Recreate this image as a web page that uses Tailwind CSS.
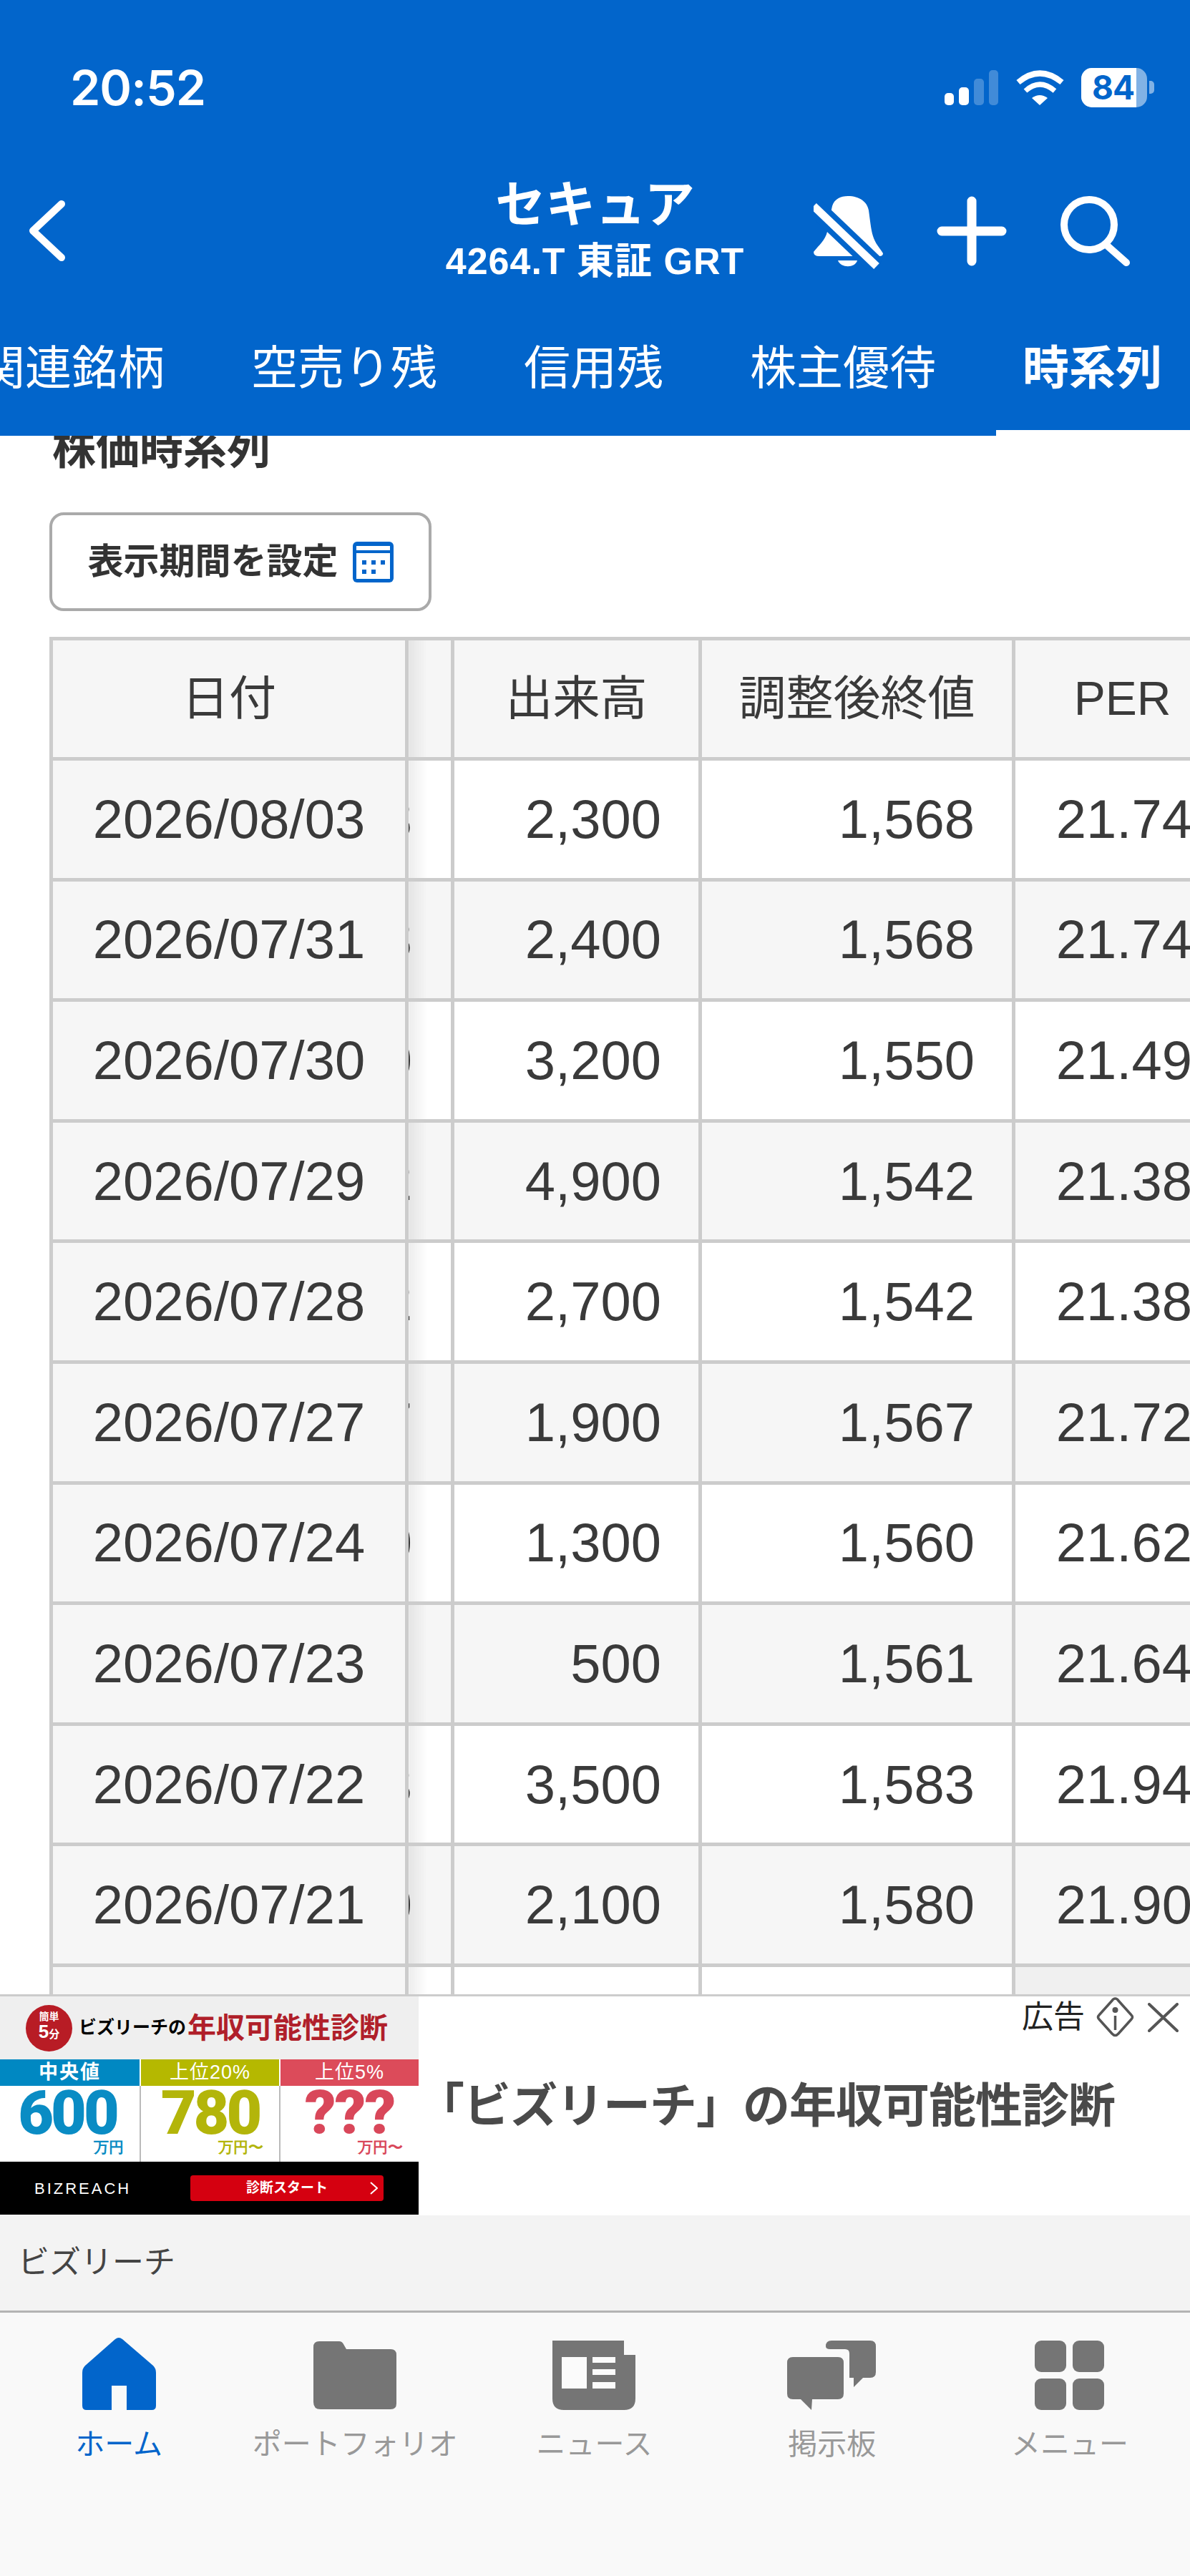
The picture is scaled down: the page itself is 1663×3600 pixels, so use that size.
<!DOCTYPE html>
<html lang="ja">
<head>
<meta charset="UTF-8">
<title>セキュア 時系列</title>
<script src="https://cdn.jsdelivr.net/npm/@tailwindcss/browser@4"></script>
</head>
<body class="bg-white">
<div class="flex flex-col w-[1663px] h-[3600px] overflow-hidden text-[#333] font-['Liberation_Sans','Noto_Sans_CJK_JP',sans-serif]">

  <!-- blue header -->
  <header class="relative z-10 h-[609px] shrink-0 bg-[#0265cb] text-white flex flex-col">
    <!-- status bar -->
    <div class="h-[210px] pt-[82px] pl-[98px] pr-[50px]">
      <div class="h-[80px] flex items-center justify-between">
        <span class="text-[68px] leading-[80px] font-['Inter',sans-serif] font-semibold tracking-[-1px]">20:52</span>
        <div class="flex items-center">
          <svg class="w-[75px] h-[49px]" viewBox="0 0 75 49" fill="#fff">
            <rect x="0" y="32" width="13" height="17" rx="5"/><rect x="20" y="24" width="14" height="25" rx="5"/>
            <rect x="41" y="12" width="14" height="37" rx="5" opacity=".25"/><rect x="62" y="0" width="13" height="49" rx="5" opacity=".25"/>
          </svg>
          <svg class="w-[67px] h-[49px] ml-[25px]" viewBox="0 0 67 49" fill="none" stroke="#fff">
            <path d="M3 17 Q33 -8 64 17" stroke-width="8"/><path d="M13 29 Q33 11 54 29" stroke-width="7"/>
            <path d="M33 49 L22 39 Q33 31 44 39 Z" fill="#fff" stroke="none"/>
          </svg>
          <div class="relative w-[92px] h-[55px] ml-[24px] rounded-[15px] bg-white/50 overflow-hidden">
            <div class="absolute inset-y-0 left-0 w-[77px] bg-white"></div>
            <span class="absolute left-[15px] top-0 leading-[55px] text-[#0265cb] text-[46px] font-bold font-['Inter',sans-serif] tracking-[-1px]">84</span>
          </div>
          <div class="w-[7px] h-[18px] ml-[3px] rounded-r-[5px] bg-white/50"></div>
        </div>
      </div>
    </div>

    <!-- title row -->
    <div class="relative h-[190px] flex flex-col items-center pt-[37px]">
      <svg class="absolute left-[36px] top-[70px] w-[60px] h-[85px]" viewBox="0 0 60 85" fill="none" stroke="#fff" stroke-width="10" stroke-linecap="round" stroke-linejoin="round"><path d="M50 5 L10 42.5 L50 80"/></svg>
      <div class="text-[70px] leading-[80px] font-bold">セキュア</div>
      <div class="mt-[10px] text-[52px] leading-[56px] font-bold tracking-[1px]">4264.T 東証 GRT</div>
      <div class="absolute right-[84px] top-[64px] flex items-start gap-[75px]">
        <svg class="w-[97px] h-[102px]" viewBox="0 0 97 102" fill="#fff">
          <path d="M48 0 C64 0 75 8 77 20 C79 34 80 46 83 56 C86 66 92 72 97 80 Q97 84 92 84 L8 84 Q0 84 0 78 C8 68 16 62 19 50 C22 38 23 26 26 14 C29 4 38 0 48 0Z"/>
          <path d="M34 90 H61 C58 101 38 101 34 90Z"/>
          <path d="M0 14 L88 98" stroke="#0265cb" stroke-width="26"/>
          <path d="M0 14 L88 98" stroke="#fff" stroke-width="11"/>
        </svg>
        <svg class="w-[98px] h-[98px]" viewBox="0 0 98 98" fill="none" stroke="#fff" stroke-width="13" stroke-linecap="round"><path d="M49 7 V91 M7 49 H91"/></svg>
        <svg class="w-[97px] h-[98px]" viewBox="0 0 97 98" fill="none" stroke="#fff" stroke-width="10" stroke-linecap="round"><circle cx="40" cy="40" r="35"/><path d="M66 70 L92 93"/></svg>
      </div>
    </div>

    <!-- tabs -->
    <nav class="relative flex-1 flex gap-[121px] -ml-[30px] pt-[70px] whitespace-nowrap text-[65px] leading-[90px]">
      <a>関連銘柄</a>
      <a>空売り残</a>
      <a>信用残</a>
      <a>株主優待</a>
      <a class="font-bold">時系列</a>
      <span class="absolute right-0 bottom-0 w-[271px] h-[8px] bg-white"></span>
    </nav>
  </header>

  <!-- scrolled content -->
  <main class="flex-1 min-h-0 overflow-hidden pl-[69px]">
    <h2 class="-mt-[19px] ml-[4px] h-[76px] text-[61px] leading-[76px] font-bold">株価時系列</h2>
    <button class="mt-[50px] w-[534px] h-[138px] border-[4px] border-[#aaa] rounded-[20px] flex items-center justify-center gap-[20px] text-[50px] font-bold">
      表示期間を設定
      <svg class="w-[57px] h-[57px]" viewBox="0 0 57 57">
        <rect width="57" height="57" rx="6" fill="#0265cb"/>
        <rect x="5" y="6" width="47" height="6" fill="#fff"/>
        <rect x="5" y="16" width="47" height="36" fill="#fff"/>
        <g fill="#0265cb"><rect x="13" y="26" width="6" height="6"/><rect x="26" y="26" width="6" height="6"/><rect x="39" y="26" width="6" height="6"/><rect x="13" y="39" width="6" height="6"/><rect x="26" y="39" width="6" height="6"/></g>
      </svg>
    </button>
    <table class="mt-[36px] w-[1649px] table-fixed border-collapse text-[76px] text-[#3a3a3a] [&_td]:border-[5px] [&_th]:border-[5px] [&_td]:border-[#ccc] [&_th]:border-[#ccc] [&_th]:font-normal [&_th]:text-[66px] [&_th]:bg-[#f6f6f6] [&_td]:p-0 [&_td]:text-right [&_td:first-child]:bg-[#f6f6f6] [&_td:first-child]:text-center [&_td:nth-child(2)]:bg-[linear-gradient(90deg,rgba(0,0,0,.07),transparent_26px)] [&_td:nth-child(n+3)]:pr-[52px] [&_tbody_tr]:h-[168.6px] [&_tbody_tr:nth-child(even)]:bg-[#f6f6f6]">
      <colgroup><col class="w-[497px]"><col class="w-[64px]"><col class="w-[346px]"><col class="w-[438px]"><col class="w-[304px]"></colgroup>
      <thead>
        <tr class="h-[168px]">
          <th>日付</th>
          <th class="bg-[linear-gradient(90deg,rgba(0,0,0,.07),transparent_26px)]"></th>
          <th>出来高</th>
          <th>調整後終値</th>
          <th>PER</th>
        </tr>
      </thead>
      <tbody>
        <tr><td>2026/08/03</td><td><div class="flex justify-end overflow-hidden whitespace-nowrap pr-[54px]">1,568</div></td><td>2,300</td><td>1,568</td><td>21.74</td></tr>
        <tr><td>2026/07/31</td><td><div class="flex justify-end overflow-hidden whitespace-nowrap pr-[54px]">1,568</div></td><td>2,400</td><td>1,568</td><td>21.74</td></tr>
        <tr><td>2026/07/30</td><td><div class="flex justify-end overflow-hidden whitespace-nowrap pr-[54px]">1,550</div></td><td>3,200</td><td>1,550</td><td>21.49</td></tr>
        <tr><td>2026/07/29</td><td><div class="flex justify-end overflow-hidden whitespace-nowrap pr-[54px]">1,542</div></td><td>4,900</td><td>1,542</td><td>21.38</td></tr>
        <tr><td>2026/07/28</td><td><div class="flex justify-end overflow-hidden whitespace-nowrap pr-[54px]">1,542</div></td><td>2,700</td><td>1,542</td><td>21.38</td></tr>
        <tr><td>2026/07/27</td><td><div class="flex justify-end overflow-hidden whitespace-nowrap pr-[54px]">1,567</div></td><td>1,900</td><td>1,567</td><td>21.72</td></tr>
        <tr><td>2026/07/24</td><td><div class="flex justify-end overflow-hidden whitespace-nowrap pr-[54px]">1,560</div></td><td>1,300</td><td>1,560</td><td>21.62</td></tr>
        <tr><td>2026/07/23</td><td><div class="flex justify-end overflow-hidden whitespace-nowrap pr-[62px]">1,561</div></td><td>500</td><td>1,561</td><td>21.64</td></tr>
        <tr><td>2026/07/22</td><td><div class="flex justify-end overflow-hidden whitespace-nowrap pr-[54px]">1,583</div></td><td>3,500</td><td>1,583</td><td>21.94</td></tr>
        <tr><td>2026/07/21</td><td><div class="flex justify-end overflow-hidden whitespace-nowrap pr-[54px]">1,580</div></td><td>2,100</td><td>1,580</td><td>21.90</td></tr>
        <tr><td></td><td></td><td></td><td></td><td class="bg-[#f0f0f0]"></td></tr>
      </tbody>
    </table>
  </main>

  <!-- ad -->
  <section class="relative h-[309px] shrink-0 bg-white border-t-[3px] border-[#ccc] flex">
    <div class="w-[585px] shrink-0 flex flex-col font-bold">
      <div class="h-[88px] bg-[#efefef] flex items-center pl-[36px]">
        <div class="w-[65px] h-[65px] rounded-full bg-[#b81c25] text-white flex flex-col items-center justify-center leading-none">
          <span class="text-[14px]">簡単</span>
          <span class="text-[26px] leading-[28px]">5<span class="text-[15px]">分</span></span>
        </div>
        <span class="ml-[9px] text-[25px] text-black whitespace-nowrap">ビズリーチの</span>
        <span class="ml-[2px] text-[40px] text-[#b01f2a] whitespace-nowrap">年収可能性診断</span>
      </div>
      <div class="h-[37px] grid grid-cols-3 text-white text-center text-[27px] leading-[37px]">
        <div class="bg-[#0088c2] tracking-[2px]">中央値</div>
        <div class="bg-[#b5b800] border-l-[2px] border-white font-normal tracking-[1px]">上位20%</div>
        <div class="bg-[#dc4b5a] border-l-[2px] border-white font-normal tracking-[1px]">上位5%</div>
      </div>
      <div class="h-[106px] grid grid-cols-3 bg-white text-center font-['Roboto',sans-serif]">
        <div class="text-[#0a8cc4] pt-[4px] pr-[7px]">
          <div class="text-[86px] leading-[68px] font-black tracking-[-4px]">600</div>
          <div class="mt-[2px] pr-[15px] text-right text-[21px] leading-[24px]">万円</div>
        </div>
        <div class="text-[#b3b50a] pt-[4px] border-l-[2px] border-[#bbb]">
          <div class="text-[86px] leading-[68px] font-black tracking-[-4px]">780</div>
          <div class="mt-[2px] pr-[22px] text-right text-[21px] leading-[24px]">万円〜</div>
        </div>
        <div class="text-[#d9475a] pt-[4px] border-l-[2px] border-[#bbb]">
          <div class="text-[86px] leading-[68px] font-black tracking-[-2px]">???</div>
          <div class="mt-[2px] pr-[22px] text-right text-[21px] leading-[24px]">万円〜</div>
        </div>
      </div>
      <div class="h-[74px] bg-black flex items-center pl-[48px] text-white">
        <span class="w-[218px] text-[22px] tracking-[3px] font-normal">BIZREACH</span>
        <div class="relative w-[270px] h-[36px] rounded-[4px] bg-[#d50010] text-center text-[19px] leading-[36px]">
          診断スタート
          <svg class="absolute right-[8px] top-[9px] w-[11px] h-[18px]" viewBox="0 0 11 18" fill="none" stroke="#fff" stroke-width="2"><path d="M1 1 L10 9 L1 17"/></svg>
        </div>
      </div>
    </div>
    <div class="flex-1 flex items-center whitespace-nowrap text-[66px] font-bold text-[#4a4a4a] -ml-[2px] tracking-[-1px]">「ビズリーチ」の年収可能性診断</div>
    <div class="absolute right-[16px] top-0 flex items-center text-[44px] leading-[58px] text-[#222]">
      広告
      <svg class="ml-[14px] w-[57px] h-[58px]" viewBox="0 0 57 58" fill="none" stroke="#555" stroke-width="3.5" stroke-linejoin="round"><path d="M28.5 3 Q31 3 33 6 L51 26 Q54 29 51 32 L33 52 Q28.5 57 24 52 L6 32 Q3 29 6 26 L24 6 Q26 3 28.5 3Z"/><circle cx="28.5" cy="19" r="4" fill="#555" stroke="none"/><path d="M28.5 27 V47"/></svg>
      <svg class="ml-[17px] w-[43px] h-[41px]" viewBox="0 0 43 41" fill="none" stroke="#555" stroke-width="4" stroke-linecap="round"><path d="M2 2 L41 39 M41 2 L2 39"/></svg>
    </div>
  </section>
  <div class="h-[136px] shrink-0 bg-[#f3f3f3] border-b-[3px] border-[#b4b4b4] pl-[25px] text-[44px] leading-[132px] text-[#444]">ビズリーチ</div>

  <!-- tab bar -->
  <footer class="h-[368px] shrink-0 bg-[#f9f9f9] grid grid-cols-5 pt-[34px] pr-[2px] text-center text-[41px] leading-[50px] text-[#999]">
    <a class="flex flex-col items-center text-[#0265cb]">
      <div class="h-[102px] flex items-end"><svg class="w-[103px] h-[102px]" viewBox="0 0 103 102" fill="#0265cb"><path d="M46 3 Q51 -1 56 3 L99 40 Q103 44 103 50 V96 Q103 102 97 102 H62 V68 H41 V102 H6 Q0 102 0 96 V50 Q0 44 4 40 Z"/></svg></div>
      <span class="mt-[23px]">ホーム</span>
    </a>
    <a class="flex flex-col items-center -translate-x-[2px]">
      <div class="h-[102px] flex items-end"><svg class="w-[116px] h-[95px] mb-[1px]" viewBox="0 0 116 95" fill="#757575"><path d="M8 0 H36 Q40 0 42 4 L46 11 H108 Q116 11 116 19 V87 Q116 95 108 95 H10 Q0 95 0 85 V8 Q0 0 8 0Z"/></svg></div>
      <span class="mt-[23px]">ポートフォリオ</span>
    </a>
    <a class="flex flex-col items-center">
      <div class="h-[102px] flex items-end"><svg class="w-[116px] h-[97px]" viewBox="0 0 116 97"><path fill="#757575" d="M0 0 H100 V20 H116 V81 Q116 97 100 97 H16 Q0 97 0 81 Z"/><g fill="#fbfbfb"><rect x="13" y="23" width="35" height="44"/><rect x="56" y="23" width="32" height="8"/><rect x="56" y="40" width="32" height="8"/><rect x="56" y="58" width="32" height="9"/></g></svg></div>
      <span class="mt-[23px]">ニュース</span>
    </a>
    <a class="flex flex-col items-center">
      <div class="h-[102px] flex items-end"><svg class="w-[125px] h-[97px]" viewBox="0 0 125 97" fill="#757575"><path d="M8 23 H71 Q79 23 79 31 V74 Q79 82 71 82 H35 L34 97 L19 82 H8 Q0 82 0 74 V31 Q0 23 8 23Z"/><path d="M62 0 H116 Q124 0 124 8 V44 Q124 52 116 52 H106 L93 65 V52 H87 V18 Q87 12 81 12 H60 Q54 12 54 8 Q54 0 62 0Z"/></svg></div>
      <span class="mt-[23px]">掲示板</span>
    </a>
    <a class="flex flex-col items-center">
      <div class="h-[102px] flex items-end"><svg class="w-[97px] h-[97px]" viewBox="0 0 97 97" fill="#757575"><rect width="44" height="44" rx="9"/><rect x="53" width="44" height="44" rx="9"/><rect y="53" width="44" height="44" rx="9"/><rect x="53" y="53" width="44" height="44" rx="9"/></svg></div>
      <span class="mt-[23px]">メニュー</span>
    </a>
  </footer>
</div>
</body>
</html>
